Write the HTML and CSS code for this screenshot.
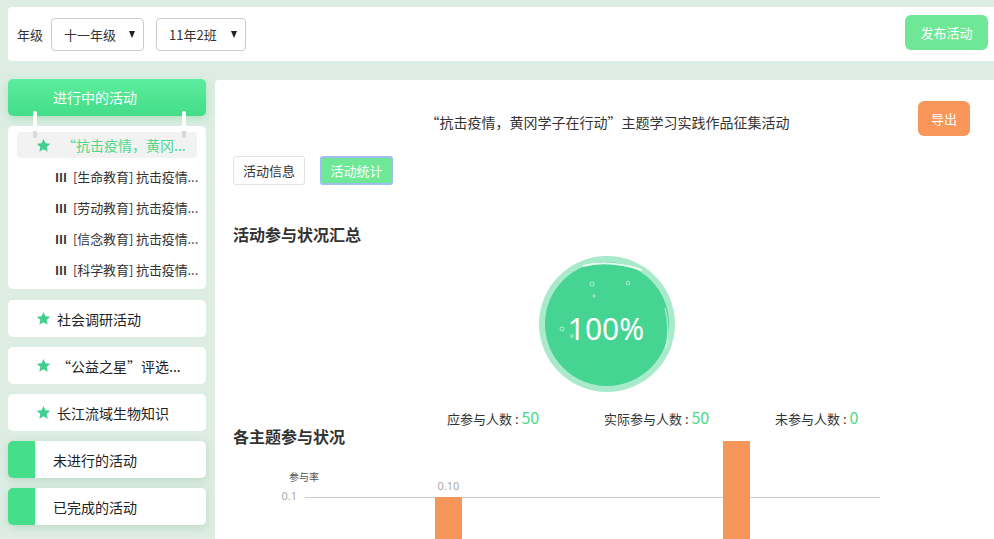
FILE: index.html
```html
<!DOCTYPE html>
<html lang="zh">
<head>
<meta charset="utf-8">
<title>活动统计</title>
<link rel="stylesheet" href="styles.css">
</head>
<body>
<div class="topbar">
  <span class="label">年级</span>
  <div class="select s1"><span>十一年级</span><i class="caret"></i></div>
  <div class="select s2"><span>11年2班</span><i class="caret"></i></div>
  <button class="publish">发布活动</button>
</div>

<div class="layout">
  <aside class="sidebar">
    <div class="group-head">进行中的活动</div>
    <span class="pin pin-l"></span><span class="pin pin-r"></span>
    <div class="group-list">
      <div class="active-item">
        <svg class="star" viewBox="0 0 24 24"><path d="M12 1.5l3.2 7 7.6.8-5.7 5.1 1.6 7.5L12 18l-6.7 3.9 1.6-7.5-5.7-5.1 7.6-.8z"/></svg>
        <span class="txt">“抗击疫情，黄冈...</span>
      </div>
      <div class="sub-item"><span class="num">Ⅲ</span><span class="txt">[生命教育] 抗击疫情...</span></div>
      <div class="sub-item"><span class="num">Ⅲ</span><span class="txt">[劳动教育] 抗击疫情...</span></div>
      <div class="sub-item"><span class="num">Ⅲ</span><span class="txt">[信念教育] 抗击疫情...</span></div>
      <div class="sub-item"><span class="num">Ⅲ</span><span class="txt">[科学教育] 抗击疫情...</span></div>
    </div>
    <div class="card">
      <svg class="star" viewBox="0 0 24 24"><path d="M12 1.5l3.2 7 7.6.8-5.7 5.1 1.6 7.5L12 18l-6.7 3.9 1.6-7.5-5.7-5.1 7.6-.8z"/></svg>
      <span class="txt">社会调研活动</span>
    </div>
    <div class="card">
      <svg class="star" viewBox="0 0 24 24"><path d="M12 1.5l3.2 7 7.6.8-5.7 5.1 1.6 7.5L12 18l-6.7 3.9 1.6-7.5-5.7-5.1 7.6-.8z"/></svg>
      <span class="txt">“公益之星”评选...</span>
    </div>
    <div class="card">
      <svg class="star" viewBox="0 0 24 24"><path d="M12 1.5l3.2 7 7.6.8-5.7 5.1 1.6 7.5L12 18l-6.7 3.9 1.6-7.5-5.7-5.1 7.6-.8z"/></svg>
      <span class="txt">长江流域生物知识</span>
    </div>
    <div class="card status">未进行的活动</div>
    <div class="card status">已完成的活动</div>
  </aside>

  <main class="panel">
    <div class="panel-head">
      <div class="title">“抗击疫情，黄冈学子在行动”主题学习实践作品征集活动</div>
      <button class="export">导出</button>
    </div>
    <div class="tabs">
      <button class="tab">活动信息</button>
      <button class="tab tab-on">活动统计</button>
    </div>

    <h2 class="section">活动参与状况汇总</h2>
    <div class="gauge-wrap">
      <svg class="gauge" width="136" height="136" viewBox="0 0 136 136">
        <circle cx="68" cy="68" r="68" fill="#a9eacb"/>
        <circle cx="68" cy="68" r="62" fill="#45d492"/>
        <path d="M44 10 Q70 3 103 14" fill="none" stroke="#ffffff" stroke-width="2" opacity="0.85"/>
        <path d="M126 52 Q131 70 127 92" fill="none" stroke="#ffffff" stroke-width="1.5" opacity="0.5"/>
        <g fill="none" stroke="#ffffff" stroke-opacity="0.55" stroke-width="1">
          <circle cx="53" cy="28" r="2"/>
          <circle cx="55" cy="40" r="1.2"/>
          <circle cx="89" cy="27" r="1.8"/>
          <circle cx="23" cy="73" r="2"/>
          <circle cx="33" cy="80" r="1.5"/>
        </g>
        <text x="67" y="84" text-anchor="middle" class="pct">100%</text>
      </svg>
    </div>
    <div class="stats">
      <div>应参与人数 : <b>50</b></div>
      <div>实际参与人数 : <b>50</b></div>
      <div>未参与人数 : <b>0</b></div>
    </div>

    <h2 class="section section2">各主题参与状况</h2>
    <svg class="chart" width="700" height="110" viewBox="0 0 700 110">
      <text x="56" y="39" class="axis-name">参与率</text>
      <text x="64" y="58" text-anchor="end" class="tick">0.1</text>
      <line x1="72" y1="55.5" x2="647" y2="55.5" stroke="#cccccc" stroke-width="1"/>
      <text x="215.5" y="48" text-anchor="middle" class="tick">0.10</text>
      <rect x="202" y="55" width="27" height="60" fill="#f7965a"/>
      <rect x="490" y="-1" width="27" height="116" fill="#f7965a"/>
    </svg>
  </main>
</div>
</body>
</html>
```

FILE: styles.css
```css
html, body {
  margin: 0;
  height: 100%;
}
body {
  padding: 7px 0 0 8px;
  box-sizing: border-box;
  background: #deede4;
  font-family: "Microsoft YaHei", "Noto Sans CJK SC", "Noto Sans", sans-serif;
  font-size: 13px;
  color: #333;
  overflow: hidden;
}
button {
  font-family: inherit;
  border: none;
  cursor: pointer;
}

/* top bar */
.topbar {
  height: 54px;
  display: flex;
  align-items: center;
  padding: 0 6px 0 9px;
  background: #fff;
  border-radius: 4px 0 0 4px;
}
.label {
  margin-right: 8px;
}
.select {
  height: 33px;
  box-sizing: border-box;
  border: 1px solid #cccccc;
  border-radius: 4px;
  display: flex;
  align-items: center;
  padding: 0 8px 0 12px;
  justify-content: space-between;
}
.s1 { width: 93px; margin-right: 12px; }
.s2 { width: 90px; }
.caret {
  width: 0;
  height: 0;
  border-left: 3.5px solid transparent;
  border-right: 3.5px solid transparent;
  border-top: 7px solid #222;
}
.publish {
  margin-left: auto;
  width: 83px;
  height: 35px;
  margin-top: -3px;
  background: #6ee896;
  color: #fff;
  font-size: 13px;
  border-radius: 6px;
}

/* layout */
.layout {
  display: flex;
  gap: 9px;
  margin-top: 18px;
  height: calc(100% - 72px);
}
.sidebar {
  width: 198px;
  flex-shrink: 0;
  position: relative;
  display: flex;
  flex-direction: column;
}
.group-head {
  height: 37px;
  line-height: 37px;
  padding-left: 45px;
  color: #fff;
  font-size: 14px;
  border-radius: 5px;
  background: linear-gradient(#5ced9e, #43dd88);
  box-shadow: 0 3px 8px rgba(70, 200, 120, 0.3);
}
.pin {
  position: absolute;
  top: 32px;
  width: 4px;
  height: 27px;
  border-radius: 2px;
  background: linear-gradient(#fff 75%, #d9d9d9 75%);
  z-index: 2;
}
.pin-l { left: 25px; }
.pin-r { left: 174px; }

.group-list {
  margin-top: 10px;
  height: 163px;
  box-sizing: border-box;
  padding: 6px 9px 4px;
  background: #fff;
  border-radius: 5px;
}
.active-item {
  height: 26px;
  display: flex;
  align-items: center;
  padding-left: 19px;
  background: #f2f2f2;
  border-radius: 4px;
  color: #4cd98a;
  font-size: 14px;
  margin-bottom: 3px;
}
.active-item .star { margin-right: 11px; }
.star {
  width: 15px;
  height: 15px;
  flex-shrink: 0;
  fill: #41cf8f;
}
.txt {
  white-space: nowrap;
}
.sub-item {
  height: 31px;
  display: flex;
  align-items: center;
  padding-left: 38px;
  font-size: 13px;
  color: #333;
  letter-spacing: -0.1px;
}
.sub-item .num {
  width: 18px;
  flex-shrink: 0;
  font-size: 12px;
  font-family: "Noto Sans CJK SC", serif;
  font-weight: bold;
}

.card {
  margin-top: 10px;
  height: 37px;
  display: flex;
  align-items: center;
  padding-left: 28px;
  padding-right: 8px;
  background: #fff;
  border-radius: 5px;
  font-size: 14px;
  color: #222;
}
.group-list + .card { margin-top: 11px; }
.card .star { margin-right: 6px; }
.card.status {
  padding-left: 18px;
  border-left: 27px solid #45df89;
  box-shadow: 0 2px 8px rgba(60, 140, 90, 0.22);
}

/* panel */
.panel {
  flex: 1;
  margin-top: 1px;
  background: #fff;
  border-radius: 4px 0 0 0;
  padding-left: 18px;
  min-width: 0;
}
.panel-head {
  display: flex;
  align-items: center;
  padding-top: 21px;
}
.title {
  flex: 1;
  text-align: center;
  padding-left: 64px;
  padding-top: 6px;
  font-size: 14px;
  color: #333;
}
.export {
  width: 52px;
  height: 35px;
  margin-right: 24px;
  background: #f9965a;
  color: #fff;
  font-size: 13px;
  border-radius: 6px;
}
.tabs {
  display: flex;
  gap: 15px;
  margin-top: 20px;
}
.tab {
  height: 29px;
  width: 72px;
  box-sizing: border-box;
  border: 1px solid #e2e2e2;
  border-radius: 3px;
  background: #fff;
  color: #333;
  font-size: 13px;
  padding: 0;
}
.tab-on {
  width: 73px;
  background: #6ee896;
  color: #fff;
  border: 2px solid #9fbff3;
}
.section {
  margin: 37px 0 0;
  font-size: 16px;
  font-weight: bold;
  line-height: 24px;
  color: #333;
}
.gauge-wrap {
  display: flex;
  justify-content: center;
  padding-right: 14px;
  margin-top: 10px;
}
.gauge { display: block; }
.pct {
  fill: #fff;
  font-size: 30px;
  font-family: "Microsoft YaHei", "Noto Sans", sans-serif;
}
.stats {
  display: grid;
  grid-template-columns: 157px 171px auto;
  padding-left: 214px;
  margin-top: 17px;
  line-height: 16px;
  font-size: 13px;
  color: #333;
}
.stats b {
  font-weight: normal;
  font-size: 16px;
  color: #4cd98a;
}
.section2 {
  margin-top: 0;
  line-height: 18px;
}
.chart {
  display: block;
  margin-top: -3px;
  overflow: visible;
}
.axis-name {
  font-size: 10px;
  fill: #555;
}
.tick {
  font-size: 11px;
  fill: #aaa;
  font-family: "Noto Sans", sans-serif;
}
```
